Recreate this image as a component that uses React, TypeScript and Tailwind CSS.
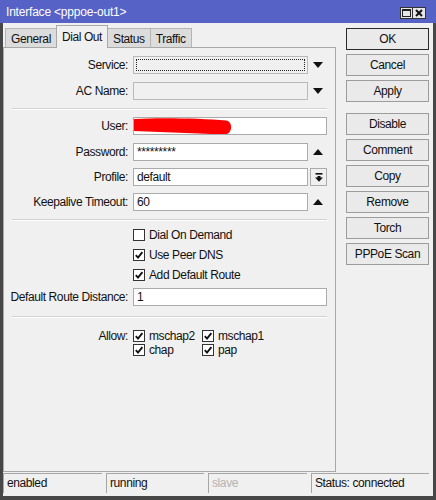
import React from 'react';

const font = "font-['Liberation_Sans',Arial,sans-serif] text-[12px] tracking-[-0.4px]";

function ArrowDown() {
  return (
    <svg width="10" height="6" viewBox="0 0 10 6">
      <polygon points="0,0 10,0 5,6" fill="#111" />
    </svg>
  );
}

function ArrowUp() {
  return (
    <svg width="10" height="6" viewBox="0 0 10 6">
      <polygon points="0,6 10,6 5,0" fill="#111" />
    </svg>
  );
}

function Check() {
  return (
    <svg width="10" height="10" viewBox="0 0 10 10">
      <path d="M1.8 5.2 L4 7.6 L8.4 2.2" stroke="#111" strokeWidth="1.9" fill="none" />
    </svg>
  );
}

function Checkbox({ checked, label }: { checked?: boolean; label: string }) {
  return (
    <div className="flex items-center">
      <div className="flex h-[12px] w-[12px] shrink-0 items-center justify-center border border-[#333] bg-white">
        {checked && <Check />}
      </div>
      <span className="ml-[4px] leading-[14px]">{label}</span>
    </div>
  );
}

function Row({ label, children }: { label: string; children: React.ReactNode }) {
  return (
    <div className="flex h-[18px] items-center pr-[8px]">
      <div className="w-[124px] shrink-0 text-right leading-[18px]">{label}</div>
      <div className="ml-[5px] flex h-full flex-1 items-center">{children}</div>
    </div>
  );
}

function Field({ value, children }: { value?: string; children?: React.ReactNode }) {
  return (
    <div className="relative h-full flex-1 overflow-hidden border border-[#ababab] bg-white pl-[3px] leading-[16px]">
      {value}
      {children}
    </div>
  );
}

function Slot({ children }: { children: React.ReactNode }) {
  return <div className="flex h-full w-[19px] shrink-0 items-center justify-center">{children}</div>;
}

function Separator() {
  return <div className="ml-[8px] mr-[8px] border-t border-b border-t-[#d2d2d2] border-b-white" />;
}

function Tab({ label, active }: { label: string; active?: boolean }) {
  return active ? (
    <div className="relative z-10 flex h-[23px] items-center border-x border-t border-[#a8a8a8] bg-[#f0f0f0] px-[5px] pb-[1px]">
      {label}
    </div>
  ) : (
    <div className="flex h-[20px] items-center border-x border-t border-b border-[#b4b4b4] border-b-[#a8a8a8] bg-[#dcdcdc] px-[5px] pt-[1px]">
      {label}
    </div>
  );
}

const buttons = ['Disable', 'Comment', 'Copy', 'Remove', 'Torch', 'PPPoE Scan'];

export default function App() {
  return (
    <div className={`flex h-[500px] w-[436px] flex-col bg-[#f0f0f0] text-[#111] ${font}`}>
      {/* Title bar */}
      <div className="flex h-[23px] shrink-0 items-center justify-between bg-[#5662c6] pl-[6px] pr-[10px] text-white">
        <span className="tracking-[-0.2px]">Interface &lt;pppoe-out1&gt;</span>
        <div className="mt-[3px] flex">
          <div className="flex h-[12px] w-[13px] items-center justify-center border border-[#333] bg-[#e6e6e6]">
            <div className="h-[8px] w-[9px] border border-t-[2px] border-[#222]" />
          </div>
          <div className="flex h-[12px] w-[13px] items-center justify-center border border-l-0 border-[#333] bg-[#e6e6e6]">
            <svg width="8" height="8" viewBox="0 0 8 8">
              <path d="M1 1 L7 7 M7 1 L1 7" stroke="#111" strokeWidth="2" />
            </svg>
          </div>
        </div>
      </div>

      {/* Body */}
      <div className="flex flex-1 flex-col border-x-[3px] border-b-[4px] border-[#474747]">
        <div className="flex">
          {/* Left column */}
          <div className="flex w-[333px] flex-col">
            <div className="-mb-px flex h-[25px] items-end pl-[2px]">
              <Tab label="General" />
              <div className="-ml-px">
                <Tab label="Dial Out" active />
              </div>
              <div className="-ml-px">
                <Tab label="Status" />
              </div>
              <div className="-ml-px">
                <Tab label="Traffic" />
              </div>
            </div>

            <div className="flex h-[425px] flex-col border border-[#a8a8a8] bg-[#f0f0f0] pt-[8px]">
              <Row label="Service:">
                <div className="h-full flex-1 border border-[#b9b9b9] bg-[#f0f0f0] p-[2px]">
                  <div className="h-full border border-dotted border-[#222]" />
                </div>
                <Slot>
                  <ArrowDown />
                </Slot>
              </Row>
              <div className="mt-[8px]">
                <Row label="AC Name:">
                  <div className="h-full flex-1 border border-[#b9b9b9] bg-[#f0f0f0]" />
                  <Slot>
                    <ArrowDown />
                  </Slot>
                </Row>
              </div>

              <div className="mt-[8px]">
                <Separator />
              </div>

              <div className="mt-[7px]">
                <Row label="User:">
                  <Field>
                    <svg className="absolute left-0 top-0" width="100" height="17" viewBox="0 0 100 17">
                      <path
                        d="M0 1 C 28 -0.5, 68 0.5, 92 2.5 C 99 3.5, 99 15.5, 91 16.5 C 62 15.5, 30 14, 0 13 Z"
                        fill="#ff0000"
                      />
                    </svg>
                  </Field>
                </Row>
              </div>
              <div className="mt-[8px]">
                <Row label="Password:">
                  <Field value="*********" />
                  <Slot>
                    <ArrowUp />
                  </Slot>
                </Row>
              </div>
              <div className="mt-[7px]">
                <Row label="Profile:">
                  <Field value="default" />
                  <div className="ml-[2px] flex h-full w-[17px] shrink-0 items-center justify-center border border-[#ababab] bg-[#f0f0f0]">
                    <svg width="8" height="9" viewBox="0 0 8 9">
                      <rect x="0.5" y="0" width="7" height="1.6" fill="#111" />
                      <polygon points="2.5,3 5.5,3 5.5,4.6 8,4.6 4,8.8 0,4.6 2.5,4.6" fill="#111" />
                    </svg>
                  </div>
                </Row>
              </div>
              <div className="mt-[7px]">
                <Row label="Keepalive Timeout:">
                  <Field value="60" />
                  <Slot>
                    <ArrowUp />
                  </Slot>
                </Row>
              </div>

              <div className="mt-[8px]">
                <Separator />
              </div>

              <div className="mt-[4px] flex flex-col pl-[129px]">
                <div className="flex h-[20px] items-center">
                  <Checkbox label="Dial On Demand" />
                </div>
                <div className="flex h-[20px] items-center">
                  <Checkbox checked label="Use Peer DNS" />
                </div>
                <div className="flex h-[20px] items-center">
                  <Checkbox checked label="Add Default Route" />
                </div>
              </div>

              <div className="mt-[3px]">
                <Row label="Default Route Distance:">
                  <Field value="1" />
                </Row>
              </div>

              <div className="mt-[10px]">
                <Separator />
              </div>

              <div className="mt-[11px] flex">
                <div className="w-[124px] shrink-0 text-right leading-[14px]">Allow:</div>
                <div className="ml-[5px] grid grid-cols-[69px_auto]">
                  <div className="flex h-[14px] items-center">
                    <Checkbox checked label="mschap2" />
                  </div>
                  <div className="flex h-[14px] items-center">
                    <Checkbox checked label="mschap1" />
                  </div>
                  <div className="flex h-[14px] items-center">
                    <Checkbox checked label="chap" />
                  </div>
                  <div className="flex h-[14px] items-center">
                    <Checkbox checked label="pap" />
                  </div>
                </div>
              </div>
            </div>
          </div>

          {/* Right column */}
          <div className="ml-[10px] flex w-[83px] flex-col gap-[4px] pt-[5px]">
            <div className="flex h-[22px] items-center justify-center border border-[#2a2a2a] bg-[#eaeaea]">OK</div>
            <div className="flex h-[22px] items-center justify-center border border-[#9c9c9c] bg-[#eaeaea]">Cancel</div>
            <div className="flex h-[22px] items-center justify-center border border-[#9c9c9c] bg-[#eaeaea]">Apply</div>
            <div className="mt-[7px] flex flex-col gap-[4px]">
              {buttons.map((b) => (
                <div key={b} className="flex h-[22px] items-center justify-center border border-[#9c9c9c] bg-[#eaeaea]">
                  {b}
                </div>
              ))}
            </div>
          </div>
        </div>

        {/* Status bar */}
        <div className="mt-[1px] flex h-[20px] gap-[4px] pr-[4px]">
          <div className="w-[99px] border-l border-t border-[#a6a6a6] pl-[3px] leading-[19px]">enabled</div>
          <div className="w-[98px] border-l border-t border-[#a6a6a6] pl-[3px] leading-[19px]">running</div>
          <div className="w-[99px] border-l border-t border-[#a6a6a6] pl-[3px] leading-[19px] text-[#b4b4b4]">slave</div>
          <div className="flex-1 border-l border-t border-[#a6a6a6] pl-[3px] leading-[19px]">Status: connected</div>
        </div>
      </div>
    </div>
  );
}
